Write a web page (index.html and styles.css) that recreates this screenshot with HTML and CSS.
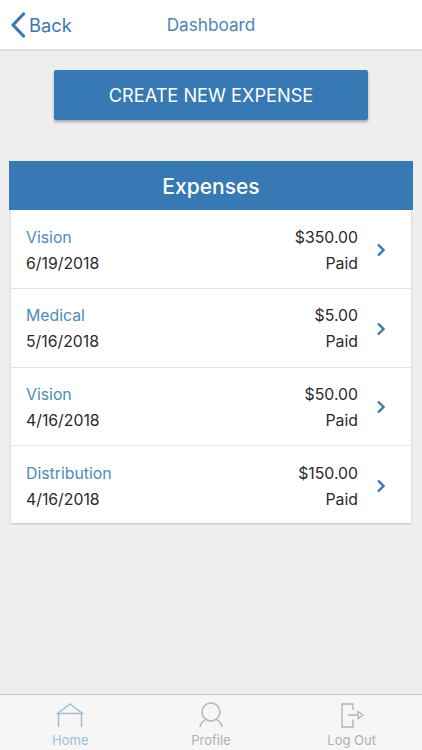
FILE: index.html
```html
<!DOCTYPE html>
<html lang="en">
<head>
<meta charset="utf-8">
<title>Dashboard</title>
<link rel="stylesheet" href="styles.css">
</head>
<body>
<div class="app">
  <header class="nav">
    <a class="back">
      <svg class="back-icon" viewBox="0 0 16 26" width="16" height="26"><path d="M13.5 2 L3 13 L13.5 24" fill="none" stroke="#3679b5" stroke-width="3.2" stroke-linecap="round" stroke-linejoin="round"/></svg>
      <span>Back</span>
    </a>
    <h1 class="nav-title">Dashboard</h1>
  </header>
  <main class="content">
    <button class="create">CREATE NEW EXPENSE</button>
    <section class="panel">
      <h2 class="panel-title">Expenses</h2>
      <ul class="list">
        <li class="row">
          <div class="cell"><span class="kind">Vision</span><span>6/19/2018</span></div>
          <div class="cell right"><span>$350.00</span><span>Paid</span></div>
          <svg class="chev" viewBox="0 0 10 14" width="10" height="14"><path d="M2 1.5 L7.5 7 L2 12.5" fill="none" stroke="#3679b5" stroke-width="2.4"/></svg>
        </li>
        <li class="row">
          <div class="cell"><span class="kind">Medical</span><span>5/16/2018</span></div>
          <div class="cell right"><span>$5.00</span><span>Paid</span></div>
          <svg class="chev" viewBox="0 0 10 14" width="10" height="14"><path d="M2 1.5 L7.5 7 L2 12.5" fill="none" stroke="#3679b5" stroke-width="2.4"/></svg>
        </li>
        <li class="row">
          <div class="cell"><span class="kind">Vision</span><span>4/16/2018</span></div>
          <div class="cell right"><span>$50.00</span><span>Paid</span></div>
          <svg class="chev" viewBox="0 0 10 14" width="10" height="14"><path d="M2 1.5 L7.5 7 L2 12.5" fill="none" stroke="#3679b5" stroke-width="2.4"/></svg>
        </li>
        <li class="row">
          <div class="cell"><span class="kind">Distribution</span><span>4/16/2018</span></div>
          <div class="cell right"><span>$150.00</span><span>Paid</span></div>
          <svg class="chev" viewBox="0 0 10 14" width="10" height="14"><path d="M2 1.5 L7.5 7 L2 12.5" fill="none" stroke="#3679b5" stroke-width="2.4"/></svg>
        </li>
      </ul>
    </section>
  </main>
  <nav class="tabs">
    <a class="tab active">
      <svg viewBox="0 0 28 26" width="28" height="26"><path d="M1.5 11.5 L14 2 L26.5 11.5 Z M2.5 11.5 V25 M25.5 11.5 V25" fill="none" stroke="#9cc0dd" stroke-width="1.5"/></svg>
      <span>Home</span>
    </a>
    <a class="tab">
      <svg viewBox="0 0 28 26" width="28" height="26"><circle cx="14" cy="10" r="9" fill="none" stroke="#b4b4b4" stroke-width="1.4"/><path d="M3 25 C3.500 21 6 19 8.500 17.500 M25 25 C24.500 21 22 19 19.500 17.500" fill="none" stroke="#b4b4b4" stroke-width="1.4"/></svg>
      <span>Profile</span>
    </a>
    <a class="tab">
      <svg viewBox="0 0 28 26" width="28" height="26"><path d="M15 8 V2 H4 V25 H15 V17.500" fill="none" stroke="#b4b4b4" stroke-width="1.4"/><path d="M10 13 H20 M20 9.500 L25 13 L20 16.500 Z" fill="none" stroke="#b4b4b4" stroke-width="1.4"/></svg>
      <span>Log Out</span>
    </a>
  </nav>
</div>
</body>
</html>
```
FILE: styles.css
```css
* { box-sizing: border-box; }
html, body { margin: 0; padding: 0; }
body { font-family: Inter, "Liberation Sans", sans-serif; color: #2a2a2a; }
.app { width: 422px; height: 750px; display: flex; flex-direction: column; background: #eeeeee; overflow: hidden; }
.nav { height: 51px; flex: none; background: #fff; border-bottom: 2px solid #dedede; display: grid; grid-template-columns: 1fr auto 1fr; align-items: center; }
.back { display: flex; align-items: center; gap: 3px; margin-left: 10px; color: #3679b5; font-size: 18.300px; }
.back-icon { display: block; }
.nav-title { grid-column: 2; margin: 0; font-size: 17.200px; font-weight: 400; color: #4a86b8; }
.content { flex: 1; padding-top: 19px; display: flex; flex-direction: column; align-items: center; }
.create { width: 314px; height: 50px; border: 0; border-radius: 2px; background: #3679b5; color: #fff; font: 400 18.200px Inter, "Liberation Sans", sans-serif; box-shadow: 0 2px 3px rgba(0,0,0,.3); }
.panel { margin-top: 41px; width: 404px; display: flex; flex-direction: column; align-items: center; }
.panel-title { margin: 0; padding-top: 1px; width: 100%; height: 49px; background: #3679b5; color: #fff; font-size: 21px; font-weight: 500; display: flex; align-items: center; justify-content: center; }
.list { list-style: none; margin: 0; padding: 0; width: 400px; background: #fff; box-shadow: 0 1px 2px rgba(0,0,0,.2); }
.row { height: 78.800px; padding: 2px 25px 0 15px; display: flex; align-items: center; border-bottom: 1px solid #e6e6e6; font-size: 15.800px; }
.row:first-child { padding-top: 3px; }
.row:last-child { border-bottom: 0; height: 77px; padding-top: 3px; }
.cell { display: flex; flex-direction: column; gap: 7px; line-height: 19px; }
.right { margin-left: auto; align-items: flex-end; margin-right: 18px; }
.kind { color: #4a8cbf; }
.chev { display: block; }
.tabs { height: 56px; flex: none; background: #f6f6f6; border-top: 1px solid #c4c4c4; display: grid; grid-template-columns: repeat(3, 1fr); }
.tab { display: flex; flex-direction: column; align-items: center; padding-top: 7px; color: #b0b0b0; font-size: 13px; gap: 4px; }
.tab.active { color: #9cc0dd; }
```
